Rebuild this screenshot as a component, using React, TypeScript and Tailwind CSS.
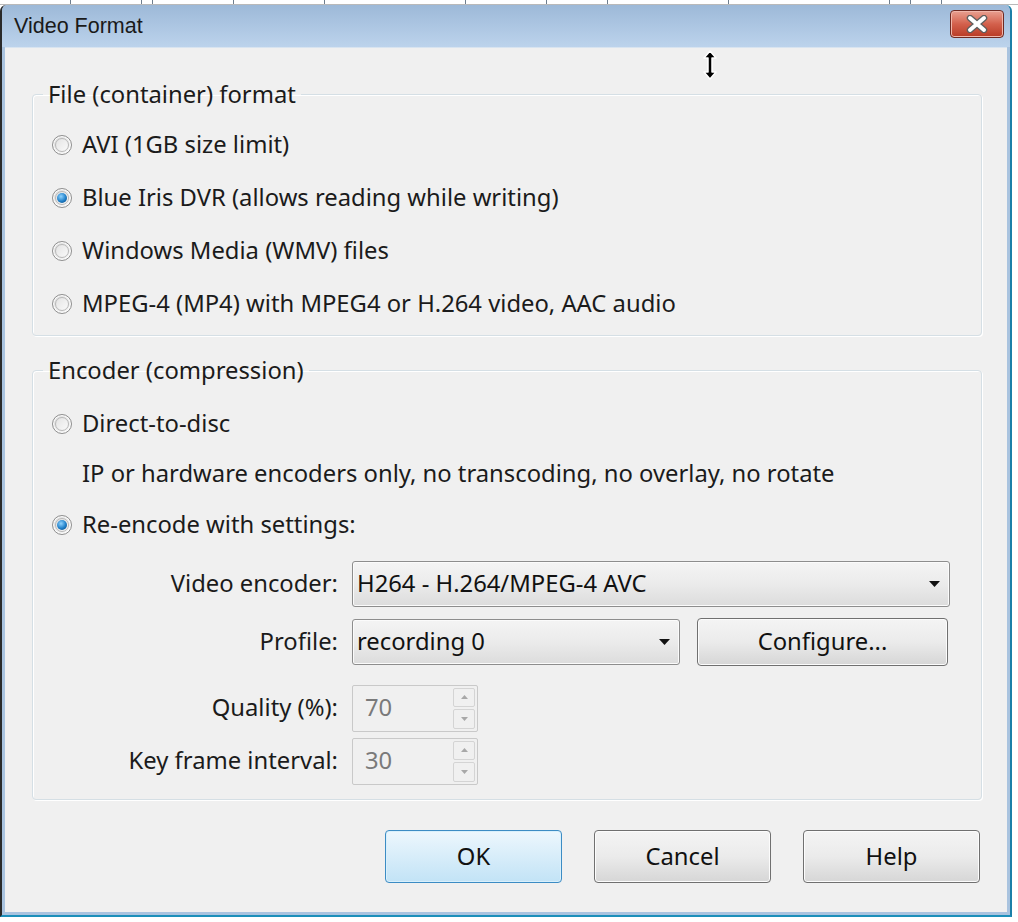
import React from "react";

/**
 * "Video Format" dialog (Win7 Aero style) from Blue Iris.
 * Two group boxes of radio options + encoder rows, then OK/Cancel/Help.
 */

const FONT = { fontFamily: '"Noto Sans", "Open Sans", sans-serif' };

function Radio({ checked, label }: { checked?: boolean; label: string }) {
  return (
    <div className="flex items-center h-[53px]">
      <span className="w-[20px] h-[20px] rounded-full border border-[#8f8f8f] bg-gradient-to-br from-[#d9d9d9] to-[#f7f7f7] flex items-center justify-center shadow-[inset_0_0_0_1px_#ffffff]">
        <span className="w-[14px] h-[14px] rounded-full bg-gradient-to-br from-[#e4e4e4] to-[#fafafa] border border-[#b9b9b9] flex items-center justify-center">
          {checked && (
            <span className="w-[10px] h-[10px] rounded-full bg-[radial-gradient(circle_at_40%_35%,#8fd3ff_0%,#1f7fc8_55%,#0d3f70_100%)]" />
          )}
        </span>
      </span>
      <span className="ml-[10px] text-[23.8px] text-[#1b1b1b]">{label}</span>
    </div>
  );
}

function Caret() {
  return (
    <svg width="11" height="6" viewBox="0 0 11 6">
      <path d="M0 0h11L5.5 6z" fill="#111" />
    </svg>
  );
}

function Select({ value, width }: { value: string; width: string }) {
  return (
    <div
      className={`${width} h-[46px] rounded-[3px] border border-[#8d8d8d] bg-gradient-to-b from-[#f4f4f4] via-[#ebebeb] to-[#dcdcdc] shadow-[inset_0_0_0_1px_#fbfbfb] flex items-center pl-[4px] pr-[9px]`}
    >
      <span className="flex-1 text-[23.8px] text-[#111]">{value}</span>
      <Caret />
    </div>
  );
}

function Spin({ value }: { value: string }) {
  return (
    <div className="w-[126px] h-[47px] border border-[#c9c9c9] rounded-[2px] bg-[#f0f0f0] flex items-stretch">
      <span className="flex-1 flex items-center pl-[12px] text-[23.8px] text-[#7a7a7a]">{value}</span>
      <div className="w-[26px] flex flex-col gap-[2px] p-[2px]">
        <span className="flex-1 border border-[#d4d4d4] rounded-[2px] flex items-center justify-center">
          <svg width="7" height="4" viewBox="0 0 7 4">
            <path d="M0 4h7L3.5 0z" fill="#a8a8a8" />
          </svg>
        </span>
        <span className="flex-1 border border-[#d4d4d4] rounded-[2px] flex items-center justify-center">
          <svg width="7" height="4" viewBox="0 0 7 4">
            <path d="M0 0h7L3.5 4z" fill="#a8a8a8" />
          </svg>
        </span>
      </div>
    </div>
  );
}

function Button({ label, focused, width = "w-[177px]", height = "h-[53px]" }: { label: string; focused?: boolean; width?: string; height?: string }) {
  return (
    <button
      type="button"
      className={
        `${width} ${height} rounded-[4px] border text-[23.8px] text-[#111] flex items-center justify-center ` +
        (focused
          ? "border-[#3c8cc4] bg-gradient-to-b from-[#edf7fd] to-[#c2e3f6] shadow-[inset_0_0_0_1px_#d9f0fc]"
          : "border-[#707070] bg-gradient-to-b from-[#f4f4f4] via-[#ebebeb] to-[#d6d6d6] shadow-[inset_0_0_0_1px_#fcfcfc]")
      }
    >
      {label}
    </button>
  );
}

function Group({ title, children, className }: { title: string; children: React.ReactNode; className?: string }) {
  return (
    <fieldset
      className={`border border-[#d5dfe5] rounded-[4px] shadow-[inset_1px_1px_0_#ffffff,1px_1px_0_#ffffff] ${className ?? ""}`}
    >
      <legend className="ml-[10px] px-[5px] text-[23.8px] text-[#1b1b1b] leading-[28px]">{title}</legend>
      <div className="pl-[19px]">{children}</div>
    </fieldset>
  );
}

function FieldRow({ label, children, h }: { label: string; children: React.ReactNode; h: string }) {
  return (
    <div className={`flex items-center ${h}`}>
      <span className="w-[319px] pr-[14px] text-right text-[23.8px] text-[#1b1b1b]">{label}</span>
      {children}
    </div>
  );
}

export default function App() {
  return (
    <div className="w-[1018px] h-[922px] bg-white relative overflow-hidden" style={FONT}>
      {/* sliver of the window behind */}
      <div className="h-[5px] flex border-b border-[#b9b9b9]">
        {[70, 140, 150, 230, 320, 460, 540, 600, 720, 880, 900, 930, 1080].map((x) => (
          <span key={x} className="w-px h-full bg-[#6d7d8d]" style={{ marginLeft: x === 70 ? 70 : 0, position: "relative", left: x - 70 }} />
        ))}
      </div>

      {/* dialog window */}
      <div className="w-[1012px] h-[912px] border-l-2 border-r-2 border-b-2 border-l-[#2a2a2a] border-r-[#1b7fa8] border-b-[#1b8fba] rounded-tl-[6px] rounded-tr-[6px] bg-[#a9c3df] flex flex-col pl-[3px] pr-[3px] pb-[3px]">
        {/* title bar */}
        <div className="h-[42px] flex items-center bg-gradient-to-b from-[#9db9d8] to-[#bcd3ec] -ml-[3px] -mr-[3px] pl-[12px] pr-[6px] rounded-tl-[6px] rounded-tr-[6px]">
          <span className="flex-1 text-[21.5px] text-[#1a1a1a]" style={{ fontFamily: '"Liberation Sans", "Noto Sans", sans-serif' }}>
            Video Format
          </span>
          <span className="w-[54px] h-[28px] mt-[-4px] rounded-[4px] border border-[#6e2a22] bg-gradient-to-b from-[#e8a091] via-[#d3604c] to-[#b83a24] shadow-[inset_0_0_0_1px_#f0b6aa] flex items-center justify-center">
            <svg width="24" height="18" viewBox="0 0 24 18">
              <path d="M5 3l14 12M19 3L5 15" stroke="#5e5e5e" strokeWidth="6.5" strokeLinecap="round" />
              <path d="M5 3l14 12M19 3L5 15" stroke="#ffffff" strokeWidth="4" strokeLinecap="round" />
            </svg>
          </span>
        </div>

        {/* body */}
        <div className="flex-1 bg-[#f0f0f0] border-t border-[#d8e4f0] flex flex-col pl-[27px] pr-[25px] pt-[32px]">
          <Group title="File (container) format" className="h-[256px] pt-[10px]">
            <Radio label="AVI (1GB size limit)" />
            <Radio checked label="Blue Iris DVR (allows reading while writing)" />
            <Radio label="Windows Media (WMV) files" />
            <Radio label="MPEG-4 (MP4) with MPEG4 or H.264 video, AAC audio" />
          </Group>

          <Group title="Encoder (compression)" className="h-[444px] mt-[20px] pt-[13px]">
            <Radio label="Direct-to-disc" />
            <div className="h-[48px] pl-[30px] flex items-center text-[23.8px] text-[#1b1b1b]">
              IP or hardware encoders only, no transcoding, no overlay, no rotate
            </div>
            <Radio checked label="Re-encode with settings:" />
            <div className="-ml-[19px] flex flex-col">
              <FieldRow label="Video encoder:" h="h-[58px] mt-[4px]">
                <Select value="H264 - H.264/MPEG-4 AVC" width="w-[598px]" />
              </FieldRow>
              <FieldRow label="Profile:" h="h-[58px]">
                <Select value="recording 0" width="w-[328px]" />
                <span className="ml-[17px]">
                  <Button label="Configure..." width="w-[251px]" height="h-[48px]" />
                </span>
              </FieldRow>
              <FieldRow label="Quality (%):" h="h-[60px] mt-[7px]">
                <Spin value="70" />
              </FieldRow>
              <FieldRow label="Key frame interval:" h="h-[46px]">
                <Spin value="30" />
              </FieldRow>
            </div>
          </Group>

          <div className="flex justify-end gap-[32px] mt-[30px] pr-[2px]">
            <Button label="OK" focused />
            <Button label="Cancel" />
            <Button label="Help" />
          </div>
        </div>
      </div>

      {/* resize cursor */}
      <svg className="absolute left-[700px] top-[50px]" width="20" height="30" viewBox="0 0 20 30">
        <path d="M10 1L4 8h4v14H4l6 7 6-7h-4V8h4z" fill="#000" stroke="#fff" strokeWidth="1.5" strokeLinejoin="round" />
      </svg>
    </div>
  );
}
